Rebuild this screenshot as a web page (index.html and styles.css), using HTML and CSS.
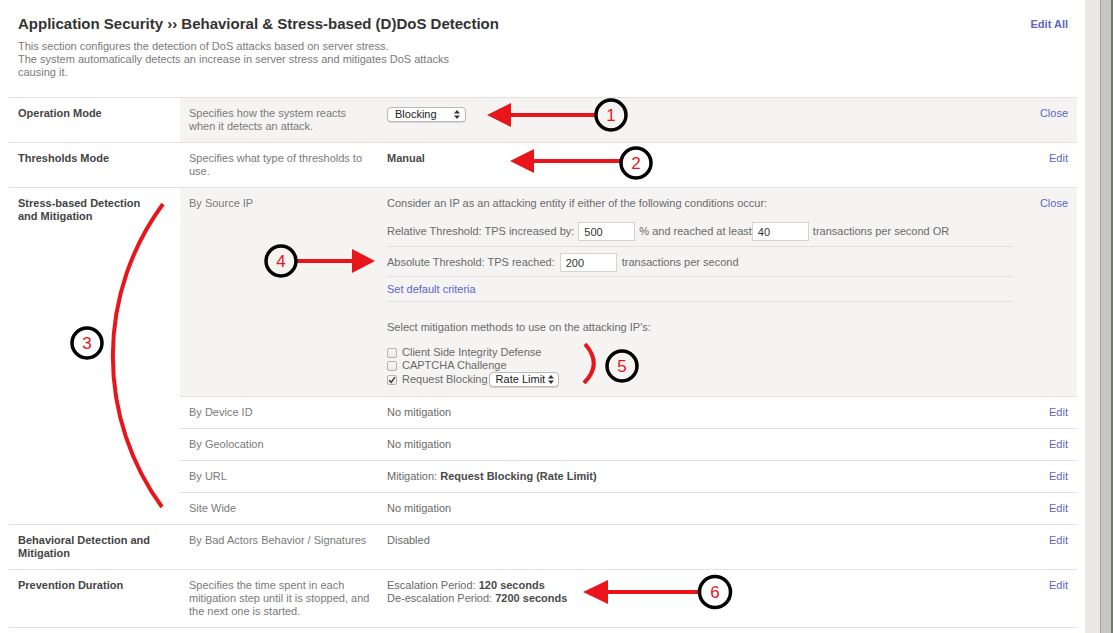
FILE: index.html
```html
<!DOCTYPE html>
<html lang="en">
<head>
<meta charset="utf-8">
<title>Behavioral &amp; Stress-based (D)DoS Detection</title>
<link rel="stylesheet" href="styles.css">
</head>
<body>
<div class="window">
  <div class="main">
    <div class="header">
      <div class="title-row">
        <h1 class="title">Application Security ›› Behavioral &amp; Stress-based (D)DoS Detection</h1>
        <a class="link strong">Edit All</a>
      </div>
      <p class="intro">This section configures the detection of DoS attacks based on server stress.<br>The system automatically detects an increase in server stress and mitigates DoS attacks<br>causing it.</p>
    </div>

    <div class="table">
      <div class="group">
        <div class="label">Operation Mode</div>
        <div class="subs">
          <div class="sub shaded">
            <div class="desc">Specifies how the system reacts when it detects an attack.</div>
            <div class="value"><span class="select sel-mode">Blocking<svg class="updown" width="6" height="9" viewBox="0 0 6 9"><path d="M3 0 L6 3.5 L0 3.5 Z M3 9 L6 5.5 L0 5.5 Z" fill="#333"/></svg></span></div>
            <div class="action"><a class="link">Close</a></div>
          </div>
        </div>
      </div>

      <div class="group">
        <div class="label">Thresholds Mode</div>
        <div class="subs">
          <div class="sub">
            <div class="desc">Specifies what type of thresholds to use.</div>
            <div class="value"><b class="em">Manual</b></div>
            <div class="action"><a class="link">Edit</a></div>
          </div>
        </div>
      </div>

      <div class="group">
        <div class="label">Stress-based Detection and Mitigation</div>
        <div class="subs">
          <div class="sub shaded">
            <div class="desc">By Source IP</div>
            <div class="value source">
              <div class="cond-intro">Consider an IP as an attacking entity if either of the following conditions occur:</div>
              <div class="criteria">
                <div class="crit crit-rel">Relative Threshold: TPS increased by:<input class="num" type="text" value="500">% and reached at least<input class="num num-tight" type="text" value="40">transactions per second OR</div>
                <div class="crit crit-abs">Absolute Threshold: TPS reached:<input class="num" type="text" value="200">transactions per second</div>
                <div class="crit crit-link"><a class="link">Set default criteria</a></div>
              </div>
              <div class="mit-intro">Select mitigation methods to use on the attacking IP's:</div>
              <ul class="checks">
                <li><span class="cb"></span>Client Side Integrity Defense</li>
                <li><span class="cb"></span>CAPTCHA Challenge</li>
                <li class="check-sel"><span class="cb checked"><svg width="8" height="8" viewBox="0 0 8 8"><path d="M1.2 4.2 L3.2 6.3 L6.9 1.2" fill="none" stroke="#333" stroke-width="1.4"/></svg></span>Request Blocking<span class="select sel-rate">Rate Limit<svg class="updown" width="6" height="9" viewBox="0 0 6 9"><path d="M3 0 L6 3.5 L0 3.5 Z M3 9 L6 5.5 L0 5.5 Z" fill="#333"/></svg></span></li>
              </ul>
            </div>
            <div class="action"><a class="link">Close</a></div>
          </div>
          <div class="sub">
            <div class="desc">By Device ID</div>
            <div class="value">No mitigation</div>
            <div class="action"><a class="link">Edit</a></div>
          </div>
          <div class="sub">
            <div class="desc">By Geolocation</div>
            <div class="value">No mitigation</div>
            <div class="action"><a class="link">Edit</a></div>
          </div>
          <div class="sub">
            <div class="desc">By URL</div>
            <div class="value">Mitigation: <b class="em">Request Blocking (Rate Limit)</b></div>
            <div class="action"><a class="link">Edit</a></div>
          </div>
          <div class="sub">
            <div class="desc">Site Wide</div>
            <div class="value">No mitigation</div>
            <div class="action"><a class="link">Edit</a></div>
          </div>
        </div>
      </div>

      <div class="group">
        <div class="label">Behavioral Detection and Mitigation</div>
        <div class="subs">
          <div class="sub">
            <div class="desc">By Bad Actors Behavior / Signatures</div>
            <div class="value">Disabled</div>
            <div class="action"><a class="link">Edit</a></div>
          </div>
        </div>
      </div>

      <div class="group">
        <div class="label">Prevention Duration</div>
        <div class="subs">
          <div class="sub">
            <div class="desc">Specifies the time spent in each mitigation step until it is stopped, and the next one is started.</div>
            <div class="value">Escalation Period: <b class="em">120 seconds</b><br>De-escalation Period: <b class="em">7200 seconds</b></div>
            <div class="action"><a class="link">Edit</a></div>
          </div>
        </div>
      </div>
    </div>
  </div>
  <div class="chrome">
    <div class="chrome-light"></div>
    <div class="chrome-line"></div>
    <div class="chrome-mid"></div>
  </div>
</div>

<svg class="annotations" width="1113" height="633" viewBox="0 0 1113 633">
  <g fill="#e8161b" stroke="none">
    <polygon points="487,115 511,103 511,127"/>
    <polygon points="510,161 534,149 534,173"/>
    <polygon points="375,261 352,249 352,273"/>
    <polygon points="583,592 608,580 608,604"/>
  </g>
  <g stroke="#e8161b" stroke-width="4" fill="none">
    <line x1="508" y1="115" x2="596" y2="115"/>
    <line x1="531" y1="161" x2="621" y2="161"/>
    <line x1="296" y1="261" x2="355" y2="261"/>
    <line x1="605" y1="592" x2="699" y2="592"/>
    <path d="M163,204 A256,256 0 0 0 162,507"/>
    <path d="M585,344 Q603,364 584,383"/>
  </g>
  <g stroke="#000" stroke-width="3.5" fill="none">
    <circle cx="611" cy="115" r="15"/>
    <circle cx="636" cy="163" r="15"/>
    <circle cx="87" cy="343" r="15"/>
    <circle cx="281" cy="261" r="15"/>
    <circle cx="622" cy="366" r="15"/>
    <circle cx="715" cy="592" r="15.5"/>
  </g>
  <g class="num-labels" fill="#e8161b" text-anchor="middle">
    <text x="611" y="121">1</text>
    <text x="636" y="169">2</text>
    <text x="87" y="349">3</text>
    <text x="281" y="267">4</text>
    <text x="622" y="372">5</text>
    <text x="715" y="598">6</text>
  </g>
</svg>
</body>
</html>
```

FILE: styles.css
```css
* { box-sizing: border-box; }
html, body { margin: 0; padding: 0; }
body {
  font-family: "Liberation Sans", Arial, Helvetica, sans-serif;
  font-size: 11px;
  line-height: 13px;
  color: #666;
  background: #fff;
  position: relative;
  width: 1113px;
  height: 633px;
  overflow: hidden;
}
.window { display: flex; height: 633px; }
.main { width: 1085px; flex: none; padding: 0 8px 0 9px; }
.chrome { flex: 1; display: flex; }
.chrome-light { width: 15px; background: #e9e8e5; }
.chrome-line { width: 1px; background: #a2a2a2; }
.chrome-mid { flex: 1; background: #c6c6c6; border-right: 2px solid #6d7b63; }

.header { padding: 14px 9px 0; }
.title-row { display: flex; justify-content: space-between; align-items: center; }
.title { margin: 0; font-size: 15px; line-height: 20px; font-weight: bold; color: #333; }
.intro { margin: 6px 0 18px; color: #7a7a7a; line-height: 13px; }

.link { color: #5b66c9; text-decoration: none; cursor: pointer; }
.strong { font-weight: bold; }
.em { font-weight: bold; color: #4a4a4a; }

.table { border-top: 1px solid #e1e1e1; }
.group { display: flex; border-bottom: 1px solid #e1e1e1; }
.label { width: 171px; flex: none; padding: 9px 20px 9px 9px; font-weight: bold; color: #444; }
.subs { flex: 1; }
.sub { display: grid; grid-template-columns: 198px 1fr auto; border-bottom: 1px solid #e1e1e1; }
.sub:last-child { border-bottom: none; }
.shaded { background: #f5f4f2; }
.desc { padding: 9px 8px 9px 9px; color: #7a7a7a; }
.value { padding: 9px; color: #6a6a6a; }
.action { padding: 9px; text-align: right; }

.select {
  display: inline-flex;
  align-items: center;
  justify-content: space-between;
  height: 15px;
  vertical-align: top;
  background: #fff;
  border: 1px solid #b9b9b9;
  border-radius: 4px;
  box-shadow: 0 1px 1px rgba(0, 0, 0, 0.12);
  color: #222;
  font-size: 11px;
  line-height: 13px;
}
.sel-mode { width: 79px; padding: 0 5px 0 7px; }
.sel-rate { width: 70px; padding: 0 4px 0 6px; margin-left: 1px; }

.cond-intro { line-height: 13px; }
.criteria { width: 626px; margin-top: 12px; }
.crit { display: flex; align-items: center; gap: 3px; border-bottom: 1px solid #e1e1e1; }
.crit-rel { padding: 0 0 5px; }
.crit-abs { padding: 6px 0 4px; gap: 4px; }
.crit-link { padding: 6px 0 5px; }
.num {
  width: 57px;
  height: 19px;
  margin: 0 1px;
  padding: 0 0 0 5px;
  border: 1px solid #d3d3d3;
  background: #fff;
  font-family: "Liberation Sans", Arial, Helvetica, sans-serif;
  font-size: 11px;
  color: #333;
  outline: none;
}
.num-tight { margin-left: -3px; }
.mit-intro { margin-top: 19px; }
.checks { list-style: none; margin: 12px 0 0; padding: 0; }
.checks li { display: flex; align-items: center; height: 13px; }
.checks li.check-sel { height: 15px; }
.cb {
  display: inline-flex;
  align-items: center;
  justify-content: center;
  width: 10px;
  height: 10px;
  margin-right: 5px;
  border: 1px solid #b3b3b3;
  border-radius: 2px;
  background: linear-gradient(#fafafa, #e9e9e9);
}

.annotations { position: absolute; left: 0; top: 0; pointer-events: none; }
.num-labels { font-family: "Liberation Sans", Arial, sans-serif; font-size: 17px; }
```
